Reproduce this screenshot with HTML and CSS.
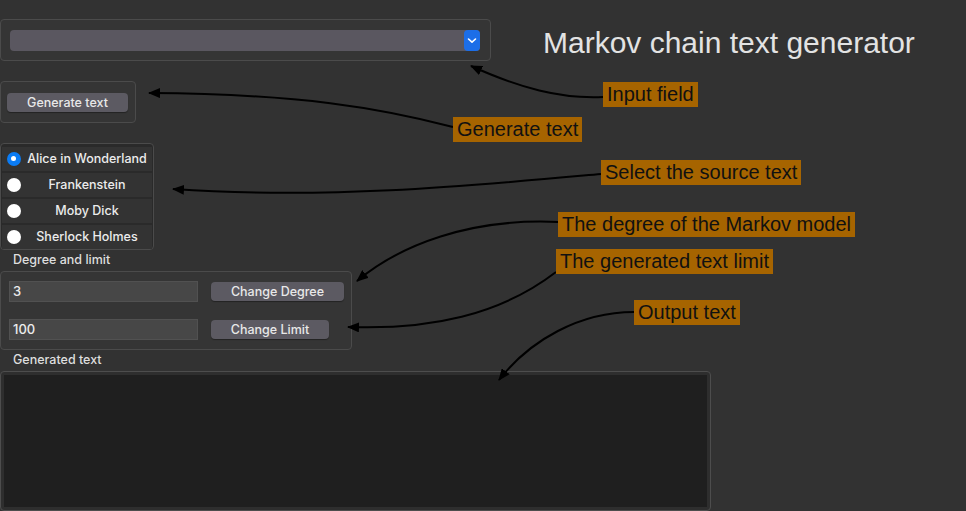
FILE: index.html
```html
<!DOCTYPE html>
<html lang="en">
<head>
<meta charset="utf-8">
<title>Markov chain text generator</title>
<link rel="stylesheet" href="styles.css">
</head>
<body>
<div class="app">
  <div class="top-row">
    <div class="group combo-group">
      <div class="combo">
        <span class="combo-arrow">
          <svg width="16" height="21" viewBox="0 0 16 21"><path d="M4.5 9 L8 12.2 L11.5 9" fill="none" stroke="#fff" stroke-width="1.6" stroke-linecap="round" stroke-linejoin="round"/></svg>
        </span>
      </div>
    </div>
    <h1 class="title">Markov chain text generator</h1>
  </div>

  <div class="group gen-group">
    <button class="btn btn-gen">Generate text</button>
  </div>

  <div class="group radio-group">
    <label class="radio-row"><span class="radio checked"></span><span class="radio-text">Alice in Wonderland</span></label>
    <label class="radio-row"><span class="radio"></span><span class="radio-text">Frankenstein</span></label>
    <label class="radio-row"><span class="radio"></span><span class="radio-text">Moby Dick</span></label>
    <label class="radio-row"><span class="radio"></span><span class="radio-text">Sherlock Holmes</span></label>
  </div>

  <div class="section-label">Degree and limit</div>
  <div class="group degree-group">
    <div class="field-row">
      <div class="input">3</div>
      <button class="btn btn-degree">Change Degree</button>
    </div>
    <div class="field-row">
      <div class="input">100</div>
      <button class="btn btn-limit">Change Limit</button>
    </div>
  </div>

  <div class="section-label section-label-out">Generated text</div>
  <div class="output">
    <div class="output-inner"></div>
  </div>

  <svg class="arrows" width="966" height="511" viewBox="0 0 966 511">
    <defs>
      <marker id="ah" markerWidth="12" markerHeight="10" refX="11" refY="5" orient="auto" markerUnits="userSpaceOnUse">
        <path d="M0,0 L12,5 L0,10 z" fill="#000"/>
      </marker>
    </defs>
    <g fill="none" stroke="#000" stroke-width="2" marker-end="url(#ah)">
      <path d="M603,97 C560,99 520,88 471,66"/>
      <path d="M453,127 C380,108 300,94 149,93"/>
      <path d="M601,174 C480,185 330,200 173,189"/>
      <path d="M558,222 C470,218 400,245 357,281"/>
      <path d="M556,272 C500,315 430,330 348,327"/>
      <path d="M634,312 C580,312 530,340 499,380"/>
    </g>
  </svg>

  <span class="note note-input">Input field</span>
  <span class="note note-gen">Generate text</span>
  <span class="note note-select">Select the source text</span>
  <span class="note note-degree">The degree of the Markov model</span>
  <span class="note note-limit">The generated text limit</span>
  <span class="note note-output">Output text</span>
</div>
</body>
</html>
```
FILE: styles.css
```css
html, body {
  margin: 0;
  padding: 0;
  background: #323232;
  width: 966px;
  height: 511px;
  overflow: hidden;
}

.app {
  position: relative;
  width: 966px;
  height: 511px;
  padding-top: 19px;
  box-sizing: border-box;
  font-family: Inter, "Noto Sans", sans-serif;
  font-size: 13px;
  font-weight: 500;
  color: #e2e2e2;
  display: flex;
  flex-direction: column;
  align-items: flex-start;
}

.group {
  box-sizing: border-box;
  border: 1px solid #4b4b4b;
  border-radius: 4px;
  background: #353535;
}

.top-row {
  display: flex;
  align-items: flex-start;
}

.combo-group {
  width: 491px;
  height: 42px;
  padding: 10px 0 0 9px;
}

.combo {
  width: 470px;
  height: 21px;
  border-radius: 4px;
  background: #5a5760;
  display: flex;
  justify-content: flex-end;
}

.combo-arrow {
  width: 16px;
  height: 21px;
  border-radius: 4px;
  background: #1c6ee8;
  display: block;
}

.combo-arrow svg {
  display: block;
}

.title {
  margin: 7px 0 0 52px;
  font-family: "Liberation Sans", Arial, sans-serif;
  font-weight: normal;
  font-size: 30px;
  line-height: 34px;
  color: #e3e3e3;
  white-space: nowrap;
}

.gen-group {
  margin-top: 20px;
  width: 136px;
  height: 42px;
  padding: 11px 0 0 6px;
}

.btn {
  box-sizing: border-box;
  height: 19px;
  border: none;
  border-radius: 4px;
  background: #5c5a62;
  color: #e8e8e8;
  font-family: Inter, "Noto Sans", sans-serif;
  font-size: 12.5px;
  font-weight: 500;
  line-height: 19px;
  padding: 0;
  text-align: center;
  box-shadow: 0 1px 1px rgba(0,0,0,0.35);
}

.btn-gen { width: 121px; }
.btn-degree { width: 133px; }
.btn-limit { width: 118px; }

.radio-group {
  margin-top: 20px;
  width: 154px;
  height: 107px;
  padding: 3px 1px 0 1px;
  background: #2a2a2a;
  display: flex;
  flex-direction: column;
  gap: 2px;
}

.radio-row {
  height: 24px;
  flex: none;
  background: #333333;
  display: flex;
  align-items: center;
  padding-left: 5px;
}

.radio {
  box-sizing: border-box;
  width: 14px;
  height: 14px;
  border-radius: 50%;
  background: #ffffff;
  flex: none;
}

.radio.checked {
  background: #0a7cf5;
  border: 4.5px solid #0a7cf5;
  position: relative;
}

.radio.checked::after {
  content: "";
  position: absolute;
  left: 0;
  top: 0;
  width: 5px;
  height: 5px;
  border-radius: 50%;
  background: #fff;
}

.radio-text {
  width: 120px;
  margin-left: 6px;
  text-align: center;
  white-space: nowrap;
  font-size: 12.5px;
  color: #ececec;
}

.section-label {
  height: 21px;
  line-height: 19px;
  padding-left: 13px;
  font-size: 12.5px;
  color: #dedede;
}

.degree-group {
  width: 352px;
  height: 80px;
  padding: 9px 0 0 8px;
  display: flex;
  flex-direction: column;
  gap: 17px;
}

.field-row {
  display: flex;
  align-items: center;
}

.input {
  box-sizing: border-box;
  width: 189px;
  height: 21px;
  background: #474747;
  border: 1px solid #515151;
  padding-left: 3px;
  line-height: 19px;
  font-size: 13px;
  color: #ececec;
  margin-right: 13px;
}

.output {
  box-sizing: border-box;
  width: 711px;
  height: 140px;
  border: 1px solid #4d4d4d;
  border-radius: 4px;
  background: #2e2e2e;
  padding: 3px;
}

.output-inner {
  height: 132px;
  background: #1f1f1f;
}

.arrows {
  position: absolute;
  left: 0;
  top: 0;
  pointer-events: none;
}

.note {
  position: absolute;
  height: 25px;
  line-height: 25px;
  padding: 0 4px;
  background: #a66400;
  color: #111111;
  font-family: "Liberation Sans", Arial, sans-serif;
  font-size: 20px;
  white-space: nowrap;
}

.note-input { left: 603px; top: 82px; }
.note-gen { left: 453px; top: 117px; }
.note-select { left: 601px; top: 160px; }
.note-degree { left: 558px; top: 212px; }
.note-limit { left: 556px; top: 249px; }
.note-output { left: 634px; top: 300px; }
```
